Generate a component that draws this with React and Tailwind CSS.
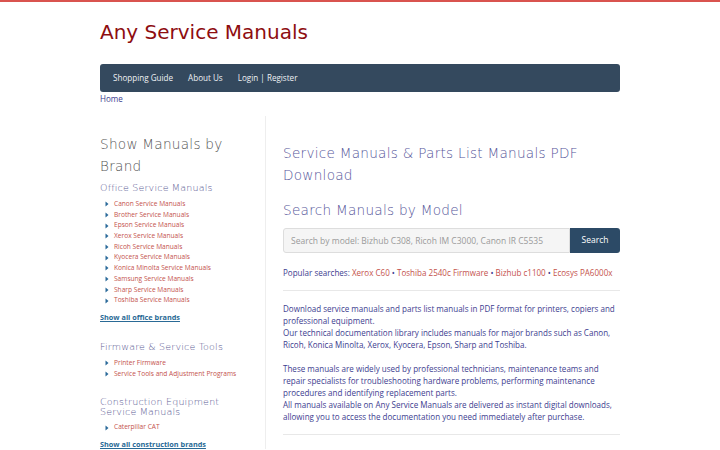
import { useState } from "react";

const officeBrands = [
  "Canon Service Manuals",
  "Brother Service Manuals",
  "Epson Service Manuals",
  "Xerox Service Manuals",
  "Ricoh Service Manuals",
  "Kyocera Service Manuals",
  "Konica Minolta Service Manuals",
  "Samsung Service Manuals",
  "Sharp Service Manuals",
  "Toshiba Service Manuals",
];

const tools = ["Printer Firmware", "Service Tools and Adjustment Programs"];

const popular = ["Xerox C60", "Toshiba 2540c Firmware", "Bizhub c1100", "Ecosys PA6000x"];

const heading = "font-['DejaVu_Sans',sans-serif] font-extralight tracking-[0.02em]";

function Caret() {
  return (
    <svg width="4" height="6" viewBox="0 0 4 6" className="shrink-0">
      <path d="M0.5 0.5 L3.5 3 L0.5 5.5 Z" fill="#2b6a9a" />
    </svg>
  );
}

function LinkList({ items, className = "mt-[4px]" }) {
  return (
    <ul className={`${className} pl-[5px]`}>
      {items.map((item) => (
        <li key={item} className="flex h-[10.7px] items-center gap-[5px]">
          <Caret />
          <a href="#" className="text-[6.6px] leading-none text-[#c4524c]">
            {item}
          </a>
        </li>
      ))}
    </ul>
  );
}

function Sidebar() {
  return (
    <aside className="w-[166px] shrink-0 border-r border-[#eeeeee] pt-[17px] pr-[12px]">
      <h2 className={`${heading} text-[13.6px] leading-[22px] text-[#555555]`}>
        Show Manuals by Brand
      </h2>
      <h3 className={`${heading} mt-[4px] text-[9.5px] leading-[14px] text-[#5c5c94]`}>
        Office Service Manuals
      </h3>
      <LinkList items={officeBrands} />
      <a href="#" className="mt-[6px] block text-[7.3px] font-bold leading-[10px] text-[#2a6a96] underline">
        Show all office brands
      </a>

      <h3 className={`${heading} mt-[18px] text-[9.5px] leading-[14px] text-[#5c5c94]`}>
        Firmware &amp; Service Tools
      </h3>
      <LinkList items={tools} />

      <h3 className={`${heading} mt-[18px] w-[130px] text-[9.5px] leading-[10px] text-[#5c5c94]`}>
        Construction Equipment Service Manuals
      </h3>
      <LinkList items={["Caterpillar CAT"]} className="mt-[5px]" />
      <a href="#" className="mt-[6px] block text-[7.3px] font-bold leading-[10px] text-[#2a6a96] underline">
        Show all construction brands
      </a>
    </aside>
  );
}

function SearchBox() {
  const [query, setQuery] = useState("");
  return (
    <form className="mt-[7px] flex h-[25px]" onSubmit={(e) => e.preventDefault()}>
      <input
        value={query}
        onChange={(e) => setQuery(e.target.value)}
        placeholder="Search by model: Bizhub C308, Ricoh IM C3000, Canon IR C5535"
        className="h-full flex-1 rounded-l-[3px] border border-[#dddddd] bg-[#f5f5f5] px-[7px] text-[8.5px] text-[#333333] outline-none placeholder:text-[#9a9a9a]"
      />
      <button
        type="submit"
        className="h-full w-[50px] rounded-r-[3px] bg-[#2c4a66] text-[8.5px] text-white"
      >
        Search
      </button>
    </form>
  );
}

function Main() {
  return (
    <main className="flex-1 pl-[17px] pt-[26px] text-[#3d3d8f]">
      <h1 className={`${heading} text-[13.6px] leading-[22px] text-[#56569a]`}>
        Service Manuals &amp; Parts List Manuals PDF Download
      </h1>
      <h2 className={`${heading} mt-[13px] text-[13.6px] leading-[22px] text-[#56569a]`}>
        Search Manuals by Model
      </h2>
      <SearchBox />
      <p className="mt-[14px] text-[8.05px] leading-[12px]">
        Popular searches:{" "}
        {popular.map((p, i) => (
          <span key={p}>
            <a href="#" className="text-[#c4524c]">
              {p}
            </a>
            {i < popular.length - 1 && " • "}
          </span>
        ))}
      </p>
      <hr className="mt-[11px] border-[#e8e8e8]" />
      <div className="mt-[12px] text-[8.05px] leading-[12px]">
        <p>
          Download service manuals and parts list manuals in PDF format for printers, copiers and
          professional equipment.
          <br />
          Our technical documentation library includes manuals for major brands such as Canon,
          Ricoh, Konica Minolta, Xerox, Kyocera, Epson, Sharp and Toshiba.
        </p>
        <p className="mt-[12px]">
          These manuals are widely used by professional technicians, maintenance teams and repair
          specialists for troubleshooting hardware problems, performing maintenance procedures and
          identifying replacement parts.
          <br />
          All manuals available on Any Service Manuals are delivered as instant digital downloads,
          allowing you to access the documentation you need immediately after purchase.
        </p>
      </div>
      <hr className="mt-[11px] border-[#e8e8e8]" />
    </main>
  );
}

export default function App() {
  return (
    <div className="min-h-[450px] bg-white font-['Open_Sans',sans-serif]">
      <div className="h-[2px] bg-[#d9534f]" />
      <div className="mx-auto w-[520px]">
        <header className="pt-[16px]">
          <div className="font-['DejaVu_Sans',sans-serif] text-[20px] leading-[28px] text-[#8e0d10]">
            Any Service Manuals
          </div>
        </header>
        <nav className="mt-[18px] flex h-[28px] items-center gap-[15px] rounded-[3px] bg-[#34495e] px-[13px] text-[8.1px] text-[#eef1f4]">
          <a href="#">Shopping Guide</a>
          <a href="#">About Us</a>
          <a href="#">Login | Register</a>
        </nav>
        <div className="mt-[1px] text-[8.1px] leading-[12px] text-[#3d3d8f]">
          <a href="#">Home</a>
        </div>
        <div className="mt-[11px] flex">
          <Sidebar />
          <Main />
        </div>
      </div>
    </div>
  );
}
